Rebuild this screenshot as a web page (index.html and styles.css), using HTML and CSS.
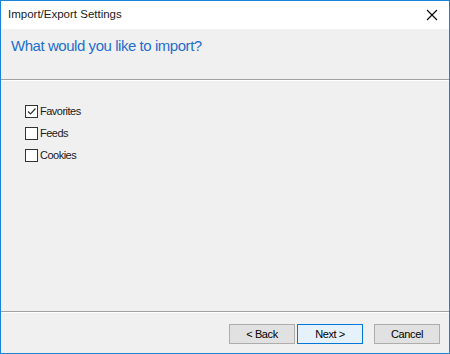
FILE: index.html
```html
<!DOCTYPE html>
<html lang="en">
<head>
    <meta charset="UTF-8">
    <title>Import/Export Settings</title>
    <link rel="stylesheet" href="styles.css">
</head>
<body>
    <div class="window">
        <div class="titlebar">
            <span class="title">Import/Export Settings</span>
            <span class="close">
                <svg width="12" height="12" viewBox="0 0 12 12">
                    <path d="M1 1 L11 11 M11 1 L1 11" stroke="#000" stroke-width="1.1" fill="none"/>
                </svg>
            </span>
        </div>

        <div class="header">
            <h1>What would you like to import?</h1>
        </div>

        <div class="content">
            <label class="option">
                <span class="box checked">
                    <svg width="11" height="11" viewBox="0 0 11 11">
                        <path d="M2 5.5 L4.5 8 L9.5 2.5" stroke="#333" stroke-width="1.2" fill="none"/>
                    </svg>
                </span>
                Favorites
            </label>
            <label class="option"><span class="box"></span>Feeds</label>
            <label class="option"><span class="box"></span>Cookies</label>
        </div>

        <div class="footer">
            <button class="btn">&lt; Back</button>
            <button class="btn default">Next &gt;</button>
            <button class="btn cancel">Cancel</button>
        </div>
    </div>
</body>
</html>
```

FILE: styles.css
```css
body {
    margin: 0;
    font-family: "Liberation Sans", Arial, sans-serif;
    font-size: 11px;
    color: #000;
}
.window {
    width: 450px;
    height: 354px;
    box-sizing: border-box;
    border: 1px solid #1883d7;
    background: #f0f0f0;
    display: flex;
    flex-direction: column;
}
.titlebar {
    height: 28px;
    background: #fff;
    display: flex;
    align-items: center;
    justify-content: space-between;
    padding: 0 11px 0 7px;
}
.title {
    font-size: 11.5px;
    line-height: 1;
    color: #1a1a1a;
}
.close {
    display: flex;
}
.header {
    height: 50px;
    border-bottom: 1px solid #a0a0a0;
    box-shadow: 0 1px 0 #fff;
    padding: 0 10px;
}
.header h1 {
    margin: 0;
    padding-top: 8px;
    font-family: "Liberation Sans", Arial, sans-serif;
    font-weight: normal;
    font-size: 15px;
    letter-spacing: -0.45px;
    color: #1e6fce;
}
.content {
    flex: 1;
    padding: 25px 0 0 24px;
    display: flex;
    flex-direction: column;
    gap: 9px;
    border-bottom: 1px solid #a0a0a0;
    box-shadow: 0 1px 0 #fff;
}
.option {
    display: flex;
    align-items: center;
    gap: 2px;
    height: 13px;
    line-height: 1;
    letter-spacing: -0.5px;
    color: #1a1a1a;
}
.box {
    width: 11px;
    height: 11px;
    border: 1px solid #333;
    background: #fff;
    display: flex;
}
.footer {
    height: 41px;
    display: flex;
    align-items: center;
    padding: 3px 9px 0 228px;
    box-sizing: border-box;
}
.btn {
    width: 66px;
    height: 20px;
    margin: 0;
    padding: 0;
    font-family: "Liberation Sans", Arial, sans-serif;
    font-size: 11px;
    letter-spacing: -0.4px;
    background: #e1e1e1;
    border: 1px solid #adadad;
    color: #000;
}
.btn.default {
    margin-left: 2px;
    background: #e5f1fb;
    border-color: #0078d7;
}
.btn.cancel {
    margin-left: 11px;
}
```
